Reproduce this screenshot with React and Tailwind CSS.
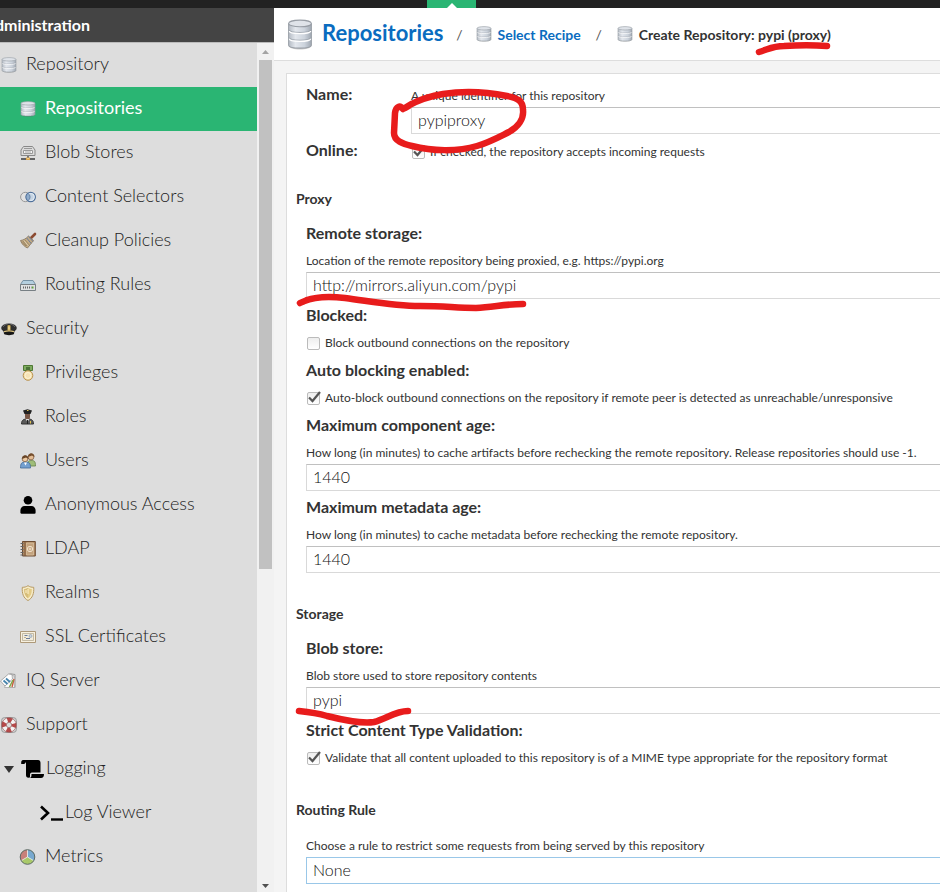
import React from "react";

function DatabaseIcon({ large }) {
  return (
    <svg className={large ? "h-[31px] w-[26px] shrink-0" : "h-4 w-4 shrink-0"} viewBox="0 0 16 16" preserveAspectRatio={large ? "none" : "xMidYMid"} aria-hidden="true">
      <defs>
        <linearGradient id="steel" x1="0" x2="1" y1="0" y2="0">
          <stop offset="0" stopColor="#b4bbc4" />
          <stop offset=".3" stopColor="#e3e7ed" />
          <stop offset=".7" stopColor="#ccd3dc" />
          <stop offset="1" stopColor="#a0a8b2" />
        </linearGradient>
      </defs>
      <path d="M1 13.500c0 3 14 3 14 0z" fill="#00000033" />
      <path d="M1 2.500v11c0 2 14 2 14 0v-11z" fill="url(#steel)" stroke="#979da5" strokeWidth=".6" />
      <path d="M1.300 5.600c0 1.800 13.400 1.800 13.400 0M1.300 9.600c0 1.800 13.400 1.800 13.400 0" fill="none" stroke="#949ba4" strokeWidth=".4" />
      <path d="M1.400 6.200c0 1.800 13.200 1.800 13.200 0M1.400 10.200c0 1.800 13.200 1.800 13.200 0" fill="none" stroke="#fff" strokeWidth=".7" />
      <ellipse cx="8" cy="2.300" rx="7" ry="1.700" fill="#dfe3e9" stroke="#979da5" strokeWidth=".6" />
    </svg>
  );
}

const icons = {
  blob: (
    <>
      <path d="M3.500 1.500h9l2.500 3.500v5.500H1V5z" fill="#dcdcdc" stroke="#888" />
      <path d="M4 3.500h8M3.500 5.500h9v3h-9z" fill="#f5f5f5" stroke="#999" />
      <path d="M5 7h6" stroke="#aaa" />
      <path d="M8 11v2" stroke="#777" strokeWidth="2" />
      <path d="M1 14h14" stroke="#555" strokeWidth="1.800" />
      <path d="M6 13.800h4" stroke="#dba64d" strokeWidth="2.400" />
      <path d="M7.500 13.500h1" stroke="#fff3cf" />
    </>
  ),
  selectors: (
    <>
      <circle cx="5.300" cy="8" r="4.700" fill="#e2e2e2" stroke="#999" />
      <circle cx="10.700" cy="8" r="4.700" fill="#b9cfe6aa" stroke="#4e6f99" strokeWidth="1.200" />
      <circle cx="10.700" cy="8" r="3.600" fill="none" stroke="#edf4fa" strokeWidth=".8" />
      <path d="M8 4.200c-2.600 2.500-2.600 5.100 0 7.600 2.600-2.500 2.600-5.100 0-7.600z" fill="#8faccb" stroke="#4e6f99" strokeWidth=".7" />
    </>
  ),
  broom: (
    <>
      <path d="m11 5 4-4" stroke="#8c4b32" strokeWidth="2.600" strokeLinecap="round" />
      <path d="m8.500 3 5 4.500-6 7.500C5 14 1.500 11 .5 7.500 4 7 6 5.500 8.500 3z" fill="#c3ab84" stroke="#85735a" strokeWidth=".8" />
      <path d="m8.500 3.500 4.500 5M6.700 5l4.500 5.500" stroke="#6d7c9c" />
      <path d="m3 8 4 5M2 8.500 6 13M5 7l4 4.800" stroke="#8c7859" strokeWidth=".7" />
      <path d="m4 7.600 4.200 5" stroke="#eadcc0" strokeWidth=".7" />
    </>
  ),
  router: (
    <>
      <path d="M3 3.500h10l2.500 4H.5z" fill="#b4cfdf" stroke="#7893a5" />
      <path d="M.5 7.500h15v6H.5z" fill="#dfe1e2" stroke="#777f84" />
      <path d="M3 10.500h8.500" stroke="#666" strokeWidth="2" strokeDasharray="1 1" />
      <path d="M12 10.500h1.500" stroke="#62a83b" strokeWidth="2" />
    </>
  ),
  cap: (
    <>
      <ellipse cx="8" cy="7" rx="7.800" ry="4.600" fill="#2f2f2f" />
      <path d="M2.500 9.500h11l-.5 3.500c-2 1.500-8 1.500-10 0z" fill="#161616" />
      <path d="M3 10.600c3-.8 7-.8 10 0" stroke="#d8c17f" fill="none" strokeWidth="1.200" />
      <path d="M6.500 4.500 8 4l1.500.5V9L8 10 6.500 9z" fill="#d8b558" />
      <path d="M8 5.500v3" stroke="#f6e7b5" />
      <path d="M2 6c1-2 3-2.700 4.500-2.700M9.500 3.300C11.500 3.500 13 4.200 14 6" stroke="#777" fill="none" strokeWidth=".8" />
    </>
  ),
  medal: (
    <>
      <path d="M3.500.5h9v5h-9z" fill="#7fab60" stroke="#4e7934" />
      <path d="M6 2h4v3.500H6z" fill="#4b7437" />
      <circle cx="8" cy="10.500" r="4.800" fill="#f1dda6" stroke="#b99251" />
      <circle cx="8" cy="10.500" r="3" fill="#f6e3b6" stroke="#fff5da" strokeWidth=".9" />
    </>
  ),
  officer: (
    <>
      <path d="M1.500 15c0-4 2-5 6-5s6 1 6 5z" fill="#5a5a5a" stroke="#333" />
      <path d="M5 4h5v4c0 4-5 4-5 0z" fill="#795746" />
      <path d="M3 1.500 7.500.2 12 1.500 10.500 5h-6z" fill="#222" />
      <path d="m5.500 10 2 3 2-3z" fill="#ddd" />
      <path d="M7.500 11v4" stroke="#222" />
      <path d="M7 1.500h1.500M10.500 12v2.500" stroke="#e2c250" />
    </>
  ),
  users: (
    <>
      <path d="M7.500 13c0-5 1-5.500 4-5.500s4 1 4 5.500z" fill="#9fbd78" stroke="#66824a" strokeWidth=".8" />
      <circle cx="11" cy="4" r="2.900" fill="#e4bd95" stroke="#765336" strokeWidth=".7" />
      <path d="M8 4c0-5 6.500-5 6.500 0L12 2.500z" fill="#754d2c" />
      <path d="M.5 15c0-4.500 1-6 5-6s5 1.500 5 6z" fill="#74a0cf" stroke="#426b98" strokeWidth=".8" />
      <path d="m4 9.500 1.500 3 1.500-3z" fill="#fff" />
      <circle cx="5" cy="5.800" r="2.900" fill="#edc9a0" stroke="#765336" strokeWidth=".7" />
      <path d="M2 6c0-5 6.500-5 6.500 0L6 4.500z" fill="#684426" />
    </>
  ),
  person: (
    <>
      <circle cx="8" cy="3.300" r="4.300" />
      <path d="M.4 15.500v-2C.4 11 2 9 4.500 9h7c2.500 0 4.100 2 4.100 4.500v2c0 .8-.3 1.200-1 1.200H1.400c-.7 0-1-.4-1-1.200z" />
    </>
  ),
  book: (
    <>
      <path d="M2.500.5h12.800v14.500H2.500z" fill="#b08a63" stroke="#6e4d32" />
      <path d="M5 1v14" stroke="#795539" />
      <path d="M6.500 2h7v12h-7z" fill="#c3a37e" stroke="#dbc4a3" strokeWidth=".7" />
      <circle cx="10" cy="8" r="2.700" fill="none" stroke="#f5e9d5" strokeWidth=".9" />
      <circle cx="10" cy="8" r="1" fill="none" stroke="#f5e9d5" strokeWidth=".8" />
      <path d="M.5 2.500h3M.5 5.500h3M.5 8.500h3M.5 11.500h3M.5 14h3" stroke="#666" />
    </>
  ),
  shield: (
    <>
      <path d="M8 .7c2 1.300 3.500 1.600 5.700 1.600.5 6-1.200 11-5.700 13.200C3.500 13.300 1.800 8.300 2.300 2.300 4.500 2.300 6 2 8 .7z" fill="#f6ebc8" stroke="#b79a63" />
      <path d="M8 3c1.500.8 2.500 1 3.800 1 .1 4-1 7.500-3.800 9.200C5.200 11.500 4.100 8 4.200 4 5.500 4 6.500 3.800 8 3z" fill="#e3cb86" />
      <path d="M8 3v10C5.200 11.500 4.100 8 4.200 4 5.500 4 6.500 3.800 8 3z" fill="#d6bd79" />
      <path d="M8 4v5M6 5v3" stroke="#fff3cf" />
    </>
  ),
  certificate: (
    <>
      <path d="M.5 2.500h15v11H.5z" fill="#f7f0df" stroke="#ad9979" />
      <path d="M2.500 4.500h11v7h-11z" fill="#f2ecdc" stroke="#b9ad96" strokeWidth=".8" />
      <path d="M4.500 6.500h3M6 9.500h4" stroke="#6d7c98" />
      <circle cx="10.500" cy="7" r="1.500" fill="#c9d3dd" stroke="#8fa0b3" strokeWidth=".7" />
      <path d="M4 8.500h2" stroke="#c0b08e" />
    </>
  ),
  tags: (
    <>
      <path d="M4 6 9.500.8 14 1.500v13H7z" fill="#e8e8e8" stroke="#999" />
      <path d="M8 .8 13 3l.5 11.500H3.500z" fill="#fbfbfb" stroke="#aaa" strokeWidth=".8" />
      <path d="m11 14 2-8" stroke="#c65b3e" strokeWidth="1.400" />
      <path d="m8.500 14 3.500-7" stroke="#7fa84a" strokeWidth="1.600" />
      <path d="M-.5 8 7.500 1l3.500.5.500 4.500-7.500 7z" fill="#fff" stroke="#999" strokeWidth=".8" />
      <path d="m2.500 7.500 4 3.500M5 5.500 9 9" stroke="#4785ae" strokeWidth="1.800" />
    </>
  ),
  lifebuoy: (
    <>
      <rect x=".6" y=".6" width="14.800" height="14.800" rx="3" fill="#d8d8d8" stroke="#999" />
      <circle cx="8" cy="8" r="5" fill="none" stroke="#f3f3f3" strokeWidth="4.600" />
      <circle cx="8" cy="8" r="5" fill="none" stroke="#b74a4a" strokeWidth="4.600" strokeDasharray="4.400 3.454" strokeDashoffset="2.200" />
      <circle cx="8" cy="8" r="7.300" fill="none" stroke="#8c4545" strokeWidth=".6" />
      <circle cx="8" cy="8" r="2.700" fill="#ddd" stroke="#884444" strokeWidth=".6" />
    </>
  ),
  pie: (
    <>
      <circle cx="7.500" cy="8" r="7.300" fill="#a9c969" />
      <path d="M7.500 8V.7a7.300 7.300 0 0 1 6.300 11z" fill="#78a9cf" />
      <path d="M7.500 8V.7a7.300 7.300 0 0 0-6.300 11z" fill="#c8807a" />
      <path d="M7.500.7V8l-6.300 3.700M7.500 8l6.300 3.700" stroke="#f3f3f3" strokeWidth=".8" fill="none" />
      <circle cx="7.500" cy="8" r="7.300" fill="none" stroke="#5c6a66" />
    </>
  ),
};

function NavIcon({ name }) {
  if (name === "database") return <DatabaseIcon />;
  return (
    <svg className="h-4 w-4 shrink-0 overflow-visible" viewBox="0 0 16 16" fill="#000" aria-hidden="true">
      {icons[name]}
    </svg>
  );
}

const nav = [
  ["Repository", "database", 0],
  ["Repositories", "database", 1],
  ["Blob Stores", "blob", 1],
  ["Content Selectors", "selectors", 1],
  ["Cleanup Policies", "broom", 1],
  ["Routing Rules", "router", 1],
  ["Security", "cap", 0],
  ["Privileges", "medal", 1],
  ["Roles", "officer", 1],
  ["Users", "users", 1],
  ["Anonymous Access", "person", 1],
  ["LDAP", "book", 1],
  ["Realms", "shield", 1],
  ["SSL Certificates", "certificate", 1],
  ["IQ Server", "tags", 0],
  ["Support", "lifebuoy", 0],
  ["Logging", "scroll", 0],
  ["Log Viewer", "prompt", 2],
  ["Metrics", "pie", 1],
];

function NavItem({ label, icon, level }) {
  const active = label === "Repositories";
  let lead;
  if (icon === "scroll") {
    lead = (
      <span className="flex w-[45px] shrink-0 items-center pl-1">
        <svg className="mr-[7px] h-[7px] w-[10px]" viewBox="0 0 10 7" fill="#333" aria-hidden="true"><path d="M0 0h10L5 7z" /></svg>
        <svg className="h-[18px] w-[23px]" viewBox="0 0 23 18" aria-hidden="true">
          <path d="M2 0h15c2 0 2.500 1.500 2.500 3v9.500H11c-1.500 0-2 1-2 2.500v2.500C6 18 5 17 5 15V4c0-2-1.300-2-1.300 0H.2V2.500C.2 1 1 0 2 0z" />
          <path d="M10.500 14H23c0 2.500-1 4-3 4H9c1.500-1 1.500-2 1.500-4z" />
        </svg>
      </span>
    );
  } else if (icon === "prompt") {
    lead = (
      <span className="flex w-16 shrink-0 items-center pl-[40px]">
        <svg className="h-4 w-[23px]" viewBox="0 0 23 16" fill="none" stroke="#000" aria-hidden="true">
          <path d="m1 1.500 7 6.500-7 6.500" strokeWidth="2.600" />
          <path d="M11 14.500h12" strokeWidth="2.400" />
        </svg>
      </span>
    );
  } else {
    lead = (
      <span className={level ? "flex w-[44px] shrink-0 pl-5" : "flex w-[25px] shrink-0 pl-px"}>
        <NavIcon name={icon} />
      </span>
    );
  }
  return (
    <li>
      <a href="#" className={`flex h-11 items-center text-[18px] whitespace-nowrap ${active ? "bg-[#2ab573] font-normal text-white" : "font-light text-[#222]"}`}>
        {lead}
        <span className="pb-1 pl-px">{label}</span>
      </a>
    </li>
  );
}

function Sidebar() {
  return (
    <aside className="flex w-[274px] shrink-0 flex-col overflow-hidden bg-[#ddd]">
      <h2 className="-ml-4 flex h-[35px] shrink-0 items-center border-b border-[#bbb] bg-[#444] text-[16px] font-bold text-white">Administration</h2>
      <div className="flex min-h-0 flex-1">
        <nav className="min-w-0 flex-1 overflow-hidden" aria-label="Administration">
          <ul>
            {nav.map(([label, icon, level]) => <NavItem key={label} label={label} icon={icon} level={level} />)}
          </ul>
        </nav>
        <div className="flex w-[17px] flex-col items-center bg-[#f1f1f1] pr-0.5 pl-0.5" aria-hidden="true">
          <svg className="mt-[7px] mb-1.5 h-[4px] w-[7px] shrink-0" viewBox="0 0 7 4" fill="#a3a3a3"><path d="M0 4h7L3.500 0z" /></svg>
          <div className="h-[60%] w-full bg-[#c1c1c1]" />
          <svg className="mt-auto mb-1 h-[4px] w-[7px] shrink-0" viewBox="0 0 7 4" fill="#505050"><path d="M0 0h7L3.500 4z" /></svg>
        </div>
      </div>
    </aside>
  );
}

const inputClass = "block h-[27px] w-full appearance-none rounded-none border border-r-0 border-[#d9d9d9] border-t-[#c0c0c0] bg-white px-1.5 pb-0.5 text-[16px] leading-6 font-light text-[#111] outline-none";
const labelClass = "block text-[16px] leading-[22px] font-bold text-[#333]";

function Help({ children }) {
  return <p className="h-[21px] text-[12px] leading-5 whitespace-nowrap">{children}</p>;
}

function Tick({ id, checked, children }) {
  return (
    <div className="flex h-[21px] items-center">
      <span className="relative ml-px h-[13px] w-[13px] shrink-0">
        <input id={id} type="checkbox" defaultChecked={checked} className="peer block h-[13px] w-[13px] appearance-none rounded-xs border border-[#bbb] bg-linear-to-b from-[#eee] to-white" />
        <svg className="pointer-events-none absolute -top-px left-px hidden h-3 w-[13px] peer-checked:block" viewBox="0 0 13 12" fill="none" aria-hidden="true">
          <path d="M1 6.500 4.500 10 12 1" stroke="#555" strokeWidth="2.200" />
        </svg>
      </span>
      <label htmlFor={id} className="pb-0.5 pl-[5px] text-[12px] leading-5 whitespace-nowrap">{children}</label>
    </div>
  );
}

function TextField({ id, label, help, value }) {
  return (
    <div className="mb-[5px]">
      <label htmlFor={id} className={labelClass}>{label}</label>
      <div className="pt-[7px]">
        <Help>{help}</Help>
        <input id={id} className={inputClass} defaultValue={value} />
      </div>
    </div>
  );
}

function TickField({ id, label, checked, text }) {
  return (
    <div className="mb-[5px]">
      <p className={labelClass}>{label}</p>
      <div className="pt-[7px]"><Tick id={id} checked={checked}>{text}</Tick></div>
    </div>
  );
}

function Section({ title, children }) {
  return (
    <section className="pt-[26px]">
      <h3 className="mb-[13px] text-[14px] leading-5 font-bold">{title}</h3>
      <div className="pl-[10px]">{children}</div>
    </section>
  );
}

function Marks() {
  return (
    <svg className="pointer-events-none absolute top-0 left-0 h-[892px] w-[940px]" viewBox="0 0 940 892" fill="none" stroke="#e81c1c" strokeLinecap="round" strokeLinejoin="round" aria-hidden="true">
      <path d="M759 52c10-3 14-6 25-6 15-1 30-1 43 0" strokeWidth="6.500" />
      <path d="M403 109c-3-4-7-3-8 4l-1 20c0 8 9 11 18 13 20 5 45 6 65 0 13-4 20-8 32-14 9-5 15-13 14-22 0-9-5-12-16-14-20-4-45-5-64-2-17 3-28 7-38 14" strokeWidth="6.500" />
      <path d="M300 303c11-6 29-7 45-5 30 4 50 8 75 8 26 0 35 2 56 2 18-1 30-4 47-4" strokeWidth="6.500" />
      <path d="M299 711c10 1 18 2 28 5 16 4 35 8 47 6 12-3 21-11 34-11" strokeWidth="6.500" />
    </svg>
  );
}

export default function App() {
  return (
    <div className="relative flex h-screen flex-col overflow-hidden bg-[#f4f4f4] font-[Lato,'Open_Sans',sans-serif] text-[#333]">
      <div className="flex h-2 shrink-0 bg-[#222] pl-[427px]">
        <div className="flex w-[49px] items-end justify-center bg-[#2ab573]">
          <svg className="h-[5px] w-[10px]" viewBox="0 0 10 5" fill="#fff" aria-hidden="true"><path d="M0 5h10L5 0z" /></svg>
        </div>
      </div>
      <div className="flex min-h-0 flex-1">
        <Sidebar />
        <main className="flex min-w-0 flex-1 flex-col">
          <header className="flex h-[53px] shrink-0 items-center border-b border-[#ddd] bg-white pl-[13px] text-[14px] font-bold whitespace-nowrap">
            <DatabaseIcon large />
            <a href="#" className="ml-[9px] pb-0.5 text-[22px] leading-7 text-[#0a6cc0]">Repositories</a>
            <span className="w-8 text-center font-normal text-[#555]">/</span>
            <DatabaseIcon />
            <a href="#" className="ml-1.5 text-[#0a6cc0]">Select Recipe</a>
            <span className="w-9 text-center font-normal text-[#555]">/</span>
            <DatabaseIcon />
            <h1 className="ml-1.5">Create Repository: pypi (proxy)</h1>
          </header>
          <form className="mt-3 ml-3 flex-1 border-t border-l border-[#ddd] bg-white pt-3 pl-[9px]">
            <div className="flex pl-[10px]">
              <label htmlFor="name" className="w-[105px] shrink-0 text-[16px] leading-4 font-bold">Name:</label>
              <div className="flex-1">
                <Help>A unique identifier for this repository</Help>
                <input id="name" className={inputClass} defaultValue="pypiproxy" />
              </div>
            </div>
            <div className="mt-2 flex pl-[10px]">
              <p className="w-[105px] shrink-0 text-[16px] leading-4 font-bold">Online:</p>
              <Tick id="online" checked>If checked, the repository accepts incoming requests</Tick>
            </div>
            <Section title="Proxy">
              <TextField id="remote" label="Remote storage:" help="Location of the remote repository being proxied, e.g. https://pypi.org" value="http://mirrors.aliyun.com/pypi" />
              <TickField id="blocked" label="Blocked:" text="Block outbound connections on the repository" />
              <TickField id="autoblock" label="Auto blocking enabled:" checked text="Auto-block outbound connections on the repository if remote peer is detected as unreachable/unresponsive" />
              <TextField id="component-age" label="Maximum component age:" help="How long (in minutes) to cache artifacts before rechecking the remote repository. Release repositories should use -1." value="1440" />
              <TextField id="metadata-age" label="Maximum metadata age:" help="How long (in minutes) to cache metadata before rechecking the remote repository." value="1440" />
            </Section>
            <Section title="Storage">
              <div className="mb-[5px]">
                <label htmlFor="blob" className={labelClass}>Blob store:</label>
                <div className="pt-[7px]">
                  <Help>Blob store used to store repository contents</Help>
                  <select id="blob" className={inputClass}><option>pypi</option></select>
                </div>
              </div>
              <TickField id="strict" label="Strict Content Type Validation:" checked text="Validate that all content uploaded to this repository is of a MIME type appropriate for the repository format" />
            </Section>
            <Section title="Routing Rule">
              <div className="pt-[3px]">
                <Help>Choose a rule to restrict some requests from being served by this repository</Help>
                <select aria-label="Routing Rule" className="block h-[27px] w-full appearance-none rounded-none border border-r-0 border-[#99c7e8] bg-white px-1.5 pb-0.5 text-[16px] leading-6 font-light text-[#111] outline-none"><option>None</option></select>
              </div>
            </Section>
          </form>
        </main>
      </div>
      <Marks />
    </div>
  );
}
